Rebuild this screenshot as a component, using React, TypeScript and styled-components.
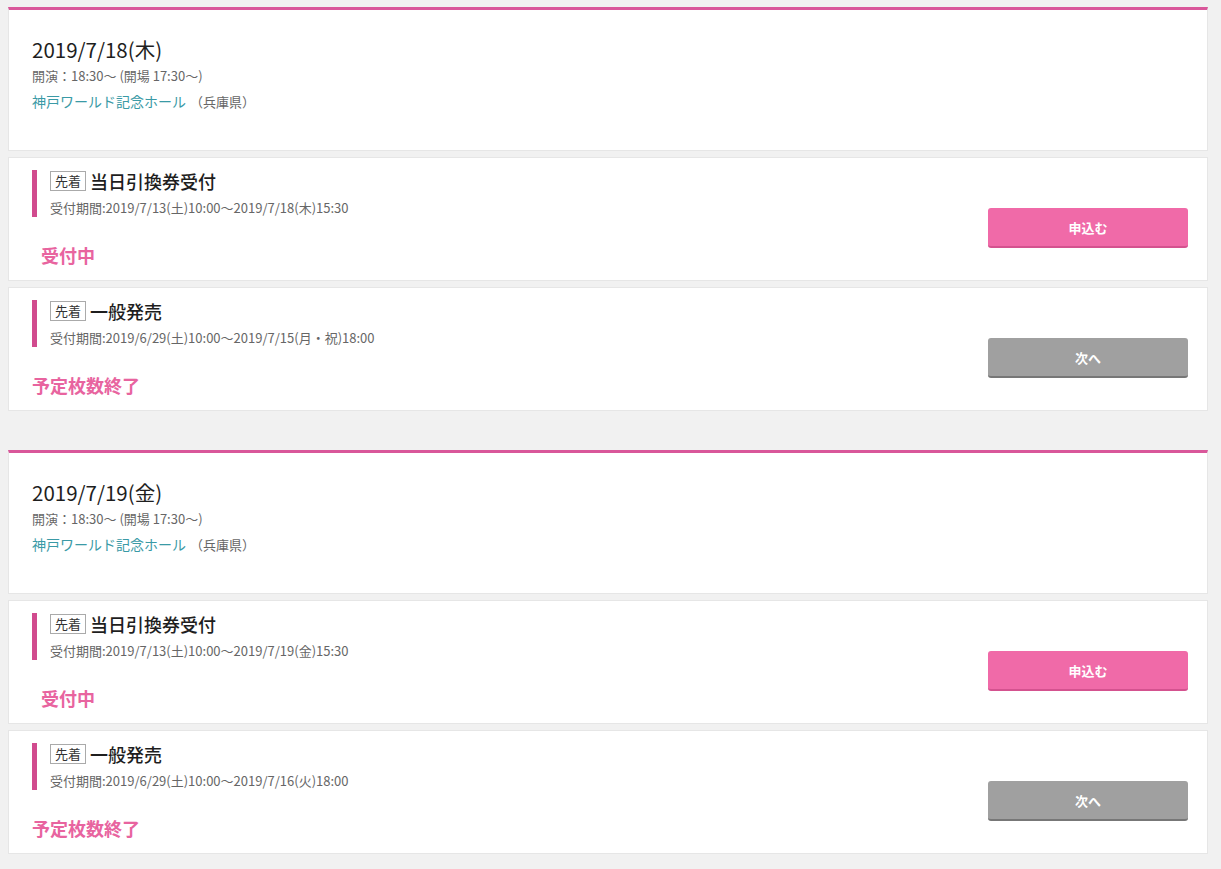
import React from "react";
import styled, { createGlobalStyle } from "styled-components";

const Global = createGlobalStyle`
  html, body { margin: 0; padding: 0; background: #f1f1f1; }
  body { font-family: "Noto Sans CJK JP", "Noto Sans", sans-serif; color: #222; }
`;

const Page = styled.div`
  width: 1200px;
  padding: 7px 0 16px 8px;
  display: flex;
  flex-direction: column;
  gap: 39px;
`;

const Group = styled.section`
  display: flex;
  flex-direction: column;
  gap: 6px;
`;

const Card = styled.div`
  background: #fff;
  border: 1px solid #e6e6e6;
`;

const DateCard = styled(Card)`
  border-top: 3px solid #d9579a;
  padding: 25px 23px 37px 23px;
`;

const DateTitle = styled.h2`
  margin: 0;
  font-size: 20.5px;
  line-height: 28px;
  font-weight: 400;
  color: #1e1e1e;
`;

const Info = styled.div`
  margin-top: 3px;
  font-size: 13px;
  line-height: 20px;
  color: #666;
`;

const Venue = styled.div`
  margin-top: 4px;
  font-size: 14px;
  line-height: 22px;
  color: #777;
  a {
    color: #3a9aa6;
    text-decoration: none;
    margin-right: 4px;
  }
`;

const Pref = styled.span`
  font-size: 13px;
  color: #666;
`;

const TicketCard = styled(Card)`
  display: flex;
  align-items: flex-end;
  padding: 12px 19px 13px 23px;
`;

const TicketMain = styled.div`
  flex: 1;
`;

const TicketHead = styled.div`
  border-left: 5px solid #d14b8e;
  padding-left: 13px;
`;

const TitleRow = styled.div`
  display: flex;
  align-items: center;
  height: 21px;
`;

const Badge = styled.span`
  box-sizing: border-box;
  display: inline-flex;
  align-items: center;
  justify-content: center;
  width: 36px;
  height: 20px;
  border: 1px solid #aaa;
  font-size: 13px;
  color: #333;
  margin-right: 4px;
`;

const TicketTitle = styled.span`
  font-size: 18px;
  font-weight: 500;
  color: #1e1e1e;
`;

const Period = styled.div`
  margin-top: 8px;
  font-size: 13px;
  line-height: 18px;
  color: #666;
`;

const Status = styled.div<{ $indent: number }>`
  margin-top: 26px;
  padding-left: ${(p) => p.$indent}px;
  font-size: 18px;
  line-height: 24px;
  font-weight: 700;
  color: #e8649f;
`;

const Button = styled.button<{ $tone: "pink" | "gray" }>`
  width: 200px;
  height: 40px;
  margin-bottom: 19px;
  border: none;
  border-radius: 3px;
  border-bottom: 2px solid ${(p) => (p.$tone === "pink" ? "#d4528f" : "#777")};
  background: ${(p) => (p.$tone === "pink" ? "#f06aa8" : "#a0a0a0")};
  color: #fff;
  font-family: "Noto Sans CJK JP", sans-serif;
  font-size: 13px;
  font-weight: 700;
  cursor: pointer;
`;

type Ticket = {
  title: string;
  period: string;
  status: string;
  indent: number;
  button: string;
  tone: "pink" | "gray";
};

type Show = { date: string; tickets: Ticket[] };

const shows: Show[] = [
  {
    date: "2019/7/18(木)",
    tickets: [
      {
        title: "当日引換券受付",
        period: "受付期間:2019/7/13(土)10:00～2019/7/18(木)15:30",
        status: "受付中",
        indent: 9,
        button: "申込む",
        tone: "pink",
      },
      {
        title: "一般発売",
        period: "受付期間:2019/6/29(土)10:00～2019/7/15(月・祝)18:00",
        status: "予定枚数終了",
        indent: 0,
        button: "次へ",
        tone: "gray",
      },
    ],
  },
  {
    date: "2019/7/19(金)",
    tickets: [
      {
        title: "当日引換券受付",
        period: "受付期間:2019/7/13(土)10:00～2019/7/19(金)15:30",
        status: "受付中",
        indent: 9,
        button: "申込む",
        tone: "pink",
      },
      {
        title: "一般発売",
        period: "受付期間:2019/6/29(土)10:00～2019/7/16(火)18:00",
        status: "予定枚数終了",
        indent: 0,
        button: "次へ",
        tone: "gray",
      },
    ],
  },
];

export default function App() {
  return (
    <>
      <Global />
      <Page>
        {shows.map((s) => (
          <Group key={s.date}>
            <DateCard>
              <DateTitle>{s.date}</DateTitle>
              <Info>開演：18:30～ (開場 17:30～)</Info>
              <Venue>
                <a href="#">神戸ワールド記念ホール</a>
                <Pref>（兵庫県）</Pref>
              </Venue>
            </DateCard>
            {s.tickets.map((t) => (
              <TicketCard key={t.title}>
                <TicketMain>
                  <TicketHead>
                    <TitleRow>
                      <Badge>先着</Badge>
                      <TicketTitle>{t.title}</TicketTitle>
                    </TitleRow>
                    <Period>{t.period}</Period>
                  </TicketHead>
                  <Status $indent={t.indent}>{t.status}</Status>
                </TicketMain>
                <Button $tone={t.tone}>{t.button}</Button>
              </TicketCard>
            ))}
          </Group>
        ))}
      </Page>
    </>
  );
}
